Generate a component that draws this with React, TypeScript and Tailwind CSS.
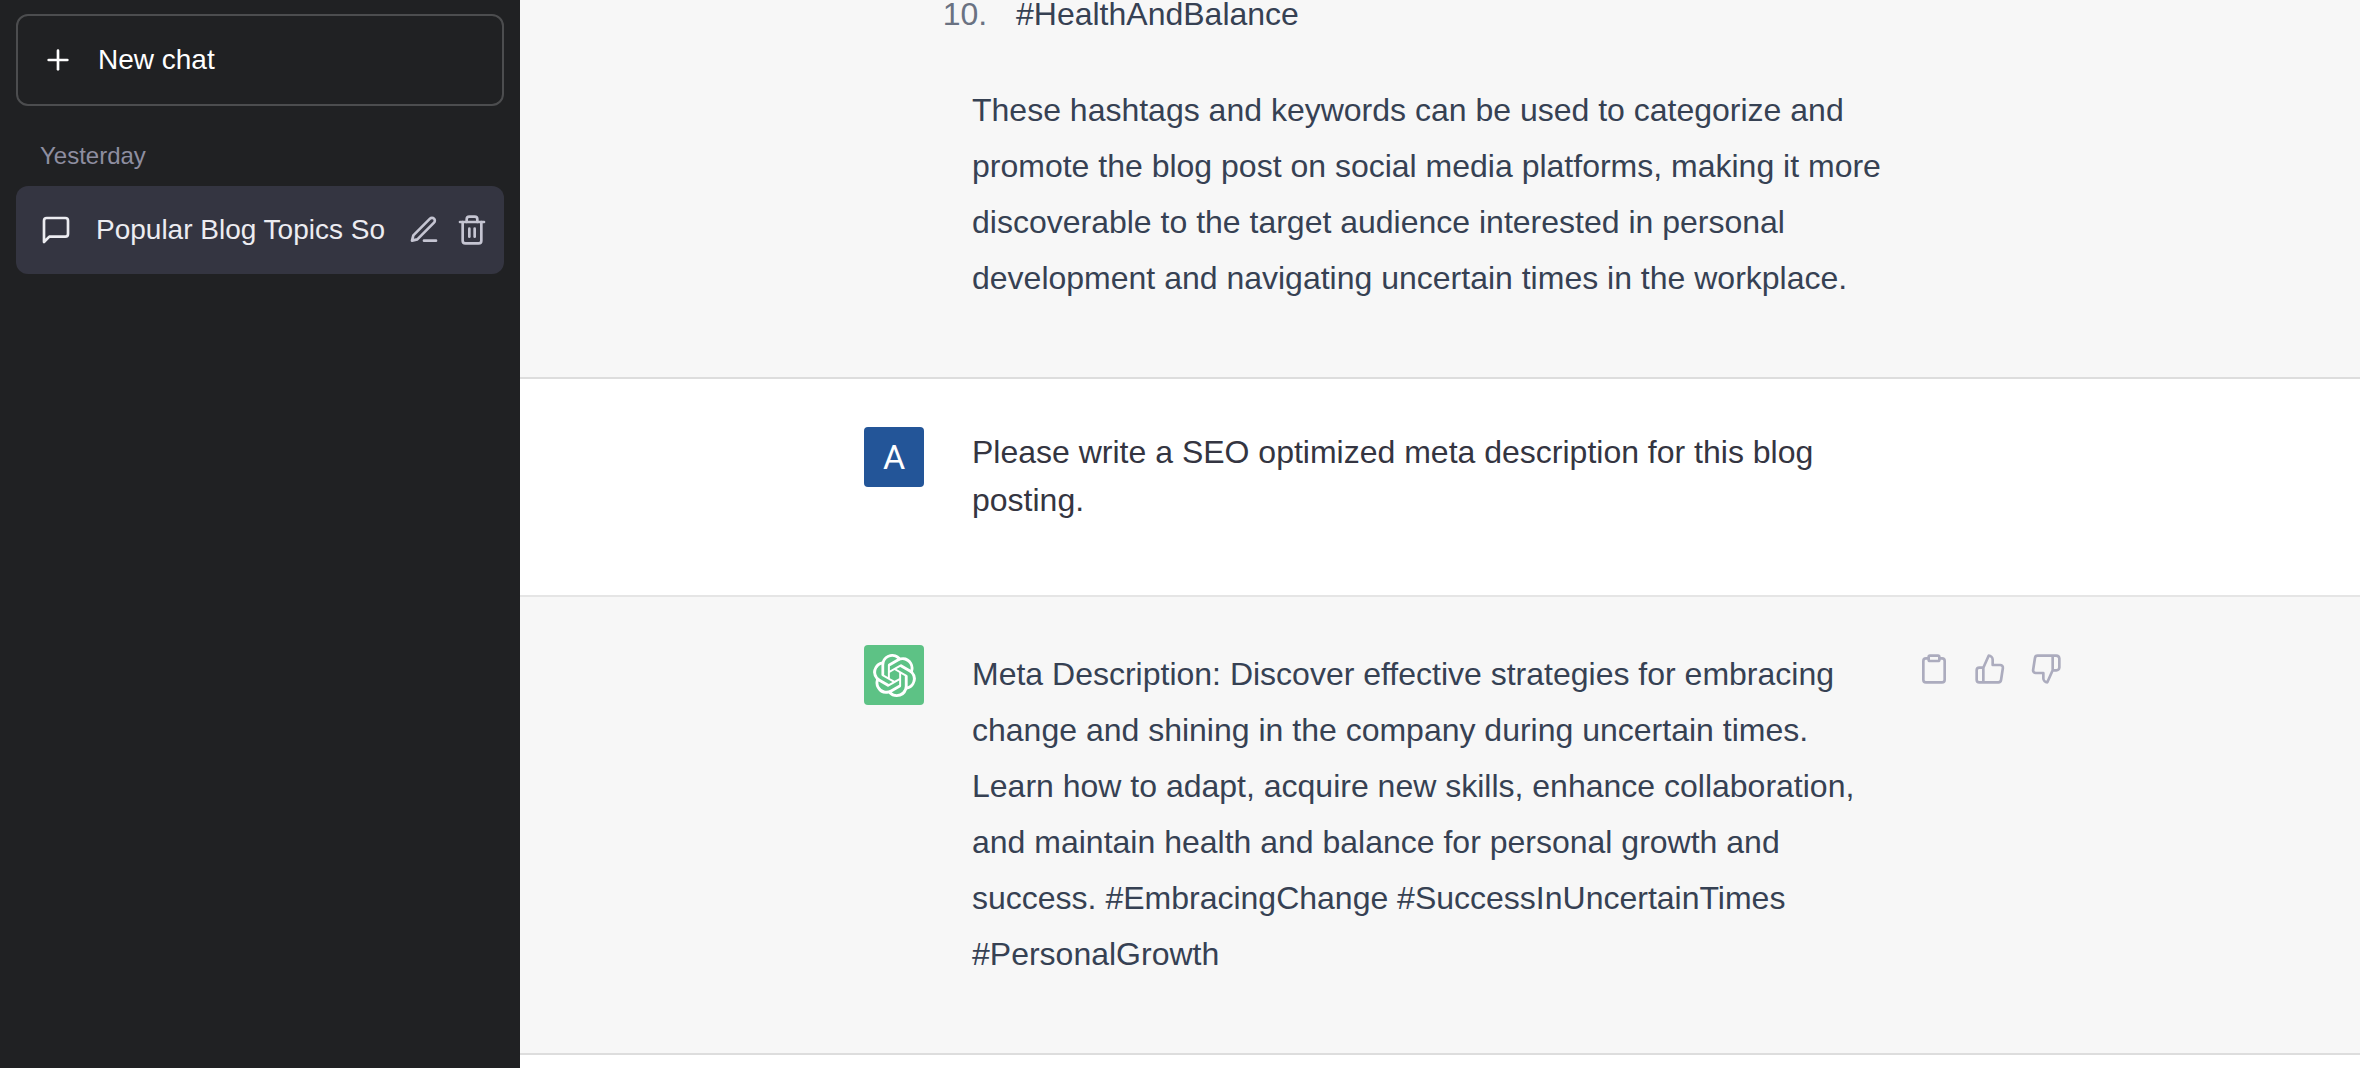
import React from 'react';
import {
  FiClipboard,
  FiEdit3,
  FiMessageSquare,
  FiPlus,
  FiThumbsDown,
  FiThumbsUp,
  FiTrash2,
} from 'react-icons/fi';
import { SiOpenai } from 'react-icons/si';

interface MessageProps {
  role: 'user' | 'assistant';
  continued?: boolean;
  children: React.ReactNode;
}

const Sidebar: React.FC = () => {
  return (
    <aside className="flex flex-col w-[520px] shrink-0 bg-[#202123] p-4 pt-3.5 text-white text-[28px] leading-10">
      <button className="flex items-center gap-6 h-[92px] shrink-0 px-6 rounded-xl border-2 border-white/20 text-left hover:bg-gray-500/10">
        <FiPlus size={32} />
        New chat
      </button>

      <h3 className="px-6 pt-[34px] pb-3.5 text-2xl leading-8 font-medium text-[#8e8ea0]">Yesterday</h3>

      <div className="flex items-center h-[88px] pl-6 pr-4 rounded-xl bg-[#343541] text-[#ececf1]">
        <a href="#chat" className="flex flex-1 items-center gap-6 min-w-0">
          <FiMessageSquare size={32} className="shrink-0" />
          <span className="flex-1 overflow-hidden whitespace-nowrap">Popular Blog Topics So</span>
        </a>
        <div className="flex gap-4 text-[#c5c5d2]">
          <button aria-label="Rename chat" className="hover:text-white">
            <FiEdit3 size={32} />
          </button>
          <button aria-label="Delete chat" className="hover:text-white">
            <FiTrash2 size={32} />
          </button>
        </div>
      </div>
    </aside>
  );
};

const Avatar: React.FC<{ role: MessageProps['role'] }> = ({ role }) => {
  if (role === 'user') {
    return (
      <div className="flex items-center justify-center size-[60px] rounded-sm bg-[#235598] font-['Roboto',sans-serif] text-[34px] text-white">
        A
      </div>
    );
  }

  return (
    <div className="flex items-center justify-center size-[60px] rounded-sm bg-[#5dc285] text-white">
      <SiOpenai size={43} />
    </div>
  );
};

const MessageActions: React.FC = () => {
  return (
    <div className="flex items-start gap-2 ml-4 text-[#acacbe]">
      <button aria-label="Copy" className="p-2 hover:text-gray-700">
        <FiClipboard size={32} />
      </button>
      <button aria-label="Good response" className="p-2 hover:text-gray-700">
        <FiThumbsUp size={32} />
      </button>
      <button aria-label="Bad response" className="p-2 hover:text-gray-700">
        <FiThumbsDown size={32} />
      </button>
    </div>
  );
};

const Message: React.FC<MessageProps> = ({ role, continued = false, children }) => {
  const isUser = role === 'user';

  return (
    <section className={`shrink-0 border-b-2 border-black/10 ${isUser ? 'bg-white' : 'bg-[#f7f7f7]'}`}>
      <div className={`flex w-full max-w-[1152px] mx-auto pb-[71px] ${continued ? 'pt-0' : 'pt-12'}`}>
        <div className="w-[60px] shrink-0 mr-12">{!continued && <Avatar role={role} />}</div>
        <div
          className={`flex flex-col gap-10 w-[922px] shrink-0 pt-px ${isUser ? 'leading-[48px] text-[#343541]' : 'leading-[56px] text-gray-700'}`}
        >
          {children}
        </div>
        {!isUser && !continued && <MessageActions />}
      </div>
    </section>
  );
};

const App: React.FC = () => {
  return (
    <div className="flex h-screen overflow-hidden bg-white font-['Liberation_Sans',Arial,sans-serif]">
      <Sidebar />

      {/* Thread stays pinned to the latest message */}
      <main className="flex flex-1 flex-col justify-end min-w-0 overflow-hidden pb-[13px] text-[32px]">
        <Message role="assistant" continued>
          <ol start={10} className="list-decimal pl-6 marker:text-gray-500">
            <li className="pl-5">#HealthAndBalance</li>
          </ol>
          <p>
            These hashtags and keywords can be used to categorize and promote the blog post on social
            media platforms, making it more discoverable to the target audience interested in personal
            development and navigating uncertain times in the workplace.
          </p>
        </Message>
        <Message role="user">
          <p>Please write a SEO optimized meta description for this blog posting.</p>
        </Message>
        <Message role="assistant">
          <p>
            Meta Description: Discover effective strategies for embracing change and shining in the
            company during uncertain times. Learn how to adapt, acquire new skills, enhance
            collaboration, and maintain health and balance for personal growth and success.
            #EmbracingChange #SuccessInUncertainTimes #PersonalGrowth
          </p>
        </Message>
      </main>
    </div>
  );
};

export default App;
